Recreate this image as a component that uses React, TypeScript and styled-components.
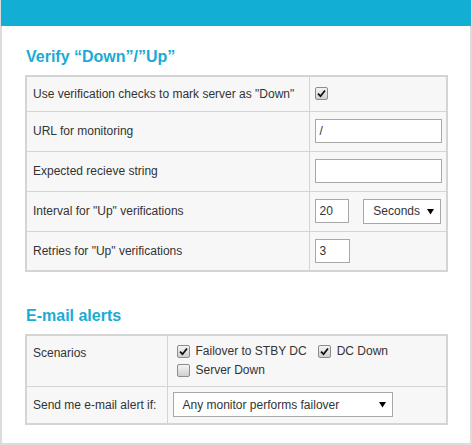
import React from "react";
import styled, { createGlobalStyle } from "styled-components";

const Global = createGlobalStyle`
  html, body { margin: 0; padding: 0; background: #fff; }
  body { font-family: "Liberation Sans", Arial, sans-serif; }
  * { box-sizing: border-box; }
`;

const Frame = styled.div`
  width: 472px;
  height: 445px;
  border: 2px solid #dcdcdc;
  border-top: none;
  background: #fff;
  display: flex;
  flex-direction: column;
`;

const TopBar = styled.div`
  height: 26px;
  margin: 0 -1px;
  background: #12aed3;
  flex-shrink: 0;
`;

const Content = styled.div`
  padding: 21px 22px 0 23px;
  display: flex;
  flex-direction: column;
`;

const Heading = styled.h2<{ $gap?: number }>`
  margin: ${(p) => p.$gap ?? 0}px 0 0 1px;
  font-size: 16px;
  line-height: 20px;
  font-weight: bold;
  color: #19abd4;
  height: 28px;
`;

const Table = styled.table`
  width: 423px;
  border-collapse: collapse;
  border: 2px solid #d4d4d4;
  background: #f7f7f7;
  table-layout: fixed;
`;

const Row = styled.tr<{ $h: number }>`
  height: ${(p) => p.$h}px;
`;

const Cell = styled.td<{ $w?: number; $top?: boolean }>`
  border: 1px solid #d4d4d4;
  padding: 0 5px;
  ${(p) => (p.$w ? `width: ${p.$w}px;` : "")}
  vertical-align: ${(p) => (p.$top ? "top" : "middle")};
  font-size: 12px;
  color: #333;
`;

const Label = styled.span<{ $pt?: number }>`
  display: ${(p) => (p.$pt ? "block" : "inline")};
  padding-left: 1px;
  padding-top: ${(p) => p.$pt ?? 0}px;
  font-size: 12px;
  color: #333;
`;

const TextBox = styled.div<{ $w: number }>`
  width: ${(p) => p.$w}px;
  height: 24px;
  border: 1px solid #a8a8a8;
  background: #fff;
  font-size: 12px;
  line-height: 22px;
  padding-left: 4px;
  color: #333;
`;

const Inline = styled.div`
  display: flex;
  align-items: center;
  gap: 14px;
`;

const SelectBox = styled.div<{ $w: number; $h: number }>`
  width: ${(p) => p.$w}px;
  height: ${(p) => p.$h}px;
  border: 1px solid #a8a8a8;
  background: #fff;
  font-size: 12px;
  color: #333;
  display: flex;
  align-items: center;
  justify-content: space-between;
  padding: 0 6px 0 9px;
`;

const CheckWrap = styled.span`
  display: inline-flex;
  align-items: center;
  justify-content: center;
  width: 13px;
  height: 13px;
  border: 1px solid #8c8c8c;
  border-radius: 2px;
  background: linear-gradient(#f4f4f4, #cfcfcf);
  flex-shrink: 0;
`;

const Check = ({ on }: { on: boolean }) => (
  <CheckWrap>
    {on && (
      <svg width="9" height="9" viewBox="0 0 9 9">
        <path d="M1 4.6 L3.5 7.2 L8 1.5" stroke="#111" strokeWidth="1.8" fill="none" />
      </svg>
    )}
  </CheckWrap>
);

const Arrow = () => (
  <svg width="7" height="7" viewBox="0 0 7 7">
    <path d="M0 1 H7 L3.5 6.5 Z" fill="#000" />
  </svg>
);

const Options = styled.div`
  display: flex;
  flex-wrap: wrap;
  width: 240px;
  row-gap: 6px;
  column-gap: 11px;
  padding: 9px 0 0 4px;
`;

const Option = styled.label`
  display: inline-flex;
  align-items: center;
  gap: 6px;
  font-size: 12px;
  line-height: 13px;
  color: #333;
`;

export default function App() {
  return (
    <>
      <Global />
      <Frame>
        <TopBar />
        <Content>
          <Heading>Verify “Down”/”Up”</Heading>
          <Table>
            <tbody>
              <Row $h={35}>
                <Cell $w={283}>
                  <Label>Use verification checks to mark server as "Down"</Label>
                </Cell>
                <Cell>
                  <Check on />
                </Cell>
              </Row>
              <Row $h={40}>
                <Cell>
                  <Label>URL for monitoring</Label>
                </Cell>
                <Cell>
                  <TextBox $w={127}>/</TextBox>
                </Cell>
              </Row>
              <Row $h={40}>
                <Cell>
                  <Label>Expected recieve string</Label>
                </Cell>
                <Cell>
                  <TextBox $w={127} />
                </Cell>
              </Row>
              <Row $h={40}>
                <Cell>
                  <Label>Interval for "Up" verifications</Label>
                </Cell>
                <Cell>
                  <Inline>
                    <TextBox $w={35}>20</TextBox>
                    <SelectBox $w={78} $h={25}>
                      Seconds
                      <Arrow />
                    </SelectBox>
                  </Inline>
                </Cell>
              </Row>
              <Row $h={40}>
                <Cell>
                  <Label>Retries for "Up" verifications</Label>
                </Cell>
                <Cell>
                  <TextBox $w={35}>3</TextBox>
                </Cell>
              </Row>
            </tbody>
          </Table>
          <Heading $gap={34}>E-mail alerts</Heading>
          <Table>
            <tbody>
              <Row $h={51}>
                <Cell $w={141} $top>
                  <Label $pt={10}>Scenarios</Label>
                </Cell>
                <Cell $top>
                  <Options>
                    <Option>
                      <Check on /> Failover to STBY DC
                    </Option>
                    <Option>
                      <Check on /> DC Down
                    </Option>
                    <Option>
                      <Check on={false} /> Server Down
                    </Option>
                  </Options>
                </Cell>
              </Row>
              <Row $h={38}>
                <Cell>
                  <Label>Send me e-mail alert if:</Label>
                </Cell>
                <Cell>
                  <SelectBox $w={220} $h={25}>
                    Any monitor performs failover
                    <Arrow />
                  </SelectBox>
                </Cell>
              </Row>
            </tbody>
          </Table>
        </Content>
      </Frame>
    </>
  );
}
